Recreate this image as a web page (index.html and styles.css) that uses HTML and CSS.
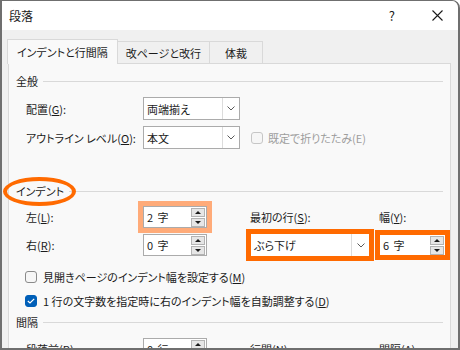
FILE: index.html
```html
<!DOCTYPE html>
<html lang="ja">
<head>
    <meta charset="UTF-8">
    <meta name="viewport" content="width=device-width, initial-scale=1.0">
    <title>段落</title>
    <link rel="stylesheet" href="styles.css">
</head>
<body>
<div class="window">
    <div class="titlebar">
        <span class="title">段落</span>
        <span class="help">?</span>
        <span class="close">
            <svg width="11" height="11" viewBox="0 0 11 11"><path d="M0.5 0.5 L10.5 10.5 M10.5 0.5 L0.5 10.5" stroke="#1a1a1a" stroke-width="1.1" fill="none"/></svg>
        </span>
    </div>
    <div class="content">
        <div class="tabs">
            <div class="tab active">インデントと行間隔</div>
            <div class="tab">改ページと改行</div>
            <div class="tab">体裁</div>
        </div>
        <div class="panel">
            <!-- 全般 -->
            <div class="group-title"><span>全般</span><div class="line"></div></div>
            <div class="grid general">
                <label>配置(<u>G</u>):</label>
                <div class="select w-main">
                    <span>両端揃え</span>
                    <i class="arrow"><svg width="8" height="5" viewBox="0 0 8 5"><path d="M0.5 0.5 L4 4 L7.5 0.5" stroke="#5a5a5a" fill="none"/></svg></i>
                </div>
                <div></div>
                <label>アウトライン レベル(<u>O</u>):</label>
                <div class="select w-main">
                    <span>本文</span>
                    <i class="arrow"><svg width="8" height="5" viewBox="0 0 8 5"><path d="M0.5 0.5 L4 4 L7.5 0.5" stroke="#5a5a5a" fill="none"/></svg></i>
                </div>
                <div class="check-row disabled">
                    <span class="check"></span>
                    <span>既定で折りたたみ(E)</span>
                </div>
            </div>

            <!-- インデント -->
            <div class="group-title indent-title">
                <span>インデント</span><div class="line"></div>
                <div class="ellipse"></div>
            </div>
            <div class="grid indent">
                <label>左(<u>L</u>):</label>
                <div class="spin mark-light">
                    <span>2 字</span>
                    <div class="spin-btns"><b class="up"></b><b class="down"></b></div>
                </div>
                <label>最初の行(<u>S</u>):</label>
                <label>幅(<u>Y</u>):</label>

                <label>右(<u>R</u>):</label>
                <div class="spin">
                    <span>0 字</span>
                    <div class="spin-btns"><b class="up"></b><b class="down"></b></div>
                </div>
                <div class="select w-first mark">
                    <span>ぶら下げ</span>
                    <i class="arrow wide"><svg width="8" height="5" viewBox="0 0 8 5"><path d="M0.5 0.5 L4 4 L7.5 0.5" stroke="#5a5a5a" fill="none"/></svg></i>
                </div>
                <div class="spin w-width mark">
                    <span>6 字</span>
                    <div class="spin-btns"><b class="up"></b><b class="down"></b></div>
                </div>
            </div>

            <div class="checks">
                <div class="check-row">
                    <span class="check"></span>
                    <span>見開きページのインデント幅を設定する(<u>M</u>)</span>
                </div>
                <div class="check-row">
                    <span class="check checked">
                        <svg width="8" height="6" viewBox="0 0 8 6"><path d="M0.8 3 L3 5 L7.2 0.8" stroke="#fff" stroke-width="1.2" fill="none"/></svg>
                    </span>
                    <span>1 行の文字数を指定時に右のインデント幅を自動調整する(<u>D</u>)</span>
                </div>
            </div>

            <!-- 間隔 -->
            <div class="group-title spacing-title"><span>間隔</span><div class="line"></div></div>
            <div class="grid spacing">
                <label>段落前(<u>B</u>):</label>
                <div class="spin">
                    <span>0 行</span>
                    <div class="spin-btns"><b class="up"></b><b class="down"></b></div>
                </div>
                <label>行間(<u>N</u>):</label>
                <label>間隔(<u>A</u>):</label>
            </div>
        </div>
    </div>
</div>
</body>
</html>
```

FILE: styles.css
```css
body {
    margin: 0;
    font-family: "Noto Sans CJK JP", "Noto Sans", sans-serif;
    font-size: 11px;
    color: #1b1b1b;
    font-feature-settings: "palt";
}
.window {
    box-sizing: border-box;
    width: 460px;
    height: 350px;
    overflow: hidden;
    background: #f0f0f0;
    border: 2px solid #6f6f6f;
    border-top-width: 1px;
    border-top-right-radius: 8px;
}
.titlebar {
    height: 29px;
    background: #fff;
    display: flex;
    align-items: center;
    padding-left: 7px;
}
.title {
    flex: 1;
    font-size: 12px;
    line-height: 16px;
}
.help {
    font-size: 13px;
    line-height: 16px;
    margin-right: 37px;
}
.close {
    display: flex;
    margin-right: 15px;
}
.content {
    padding: 0 7px 0 6px;
}
.tabs {
    height: 33px;
    display: flex;
    align-items: flex-end;
    position: relative;
    z-index: 1;
}
.tab {
    box-sizing: border-box;
    min-width: 53px;
    height: 22px;
    padding: 0 8px;
    display: flex;
    align-items: center;
    justify-content: center;
    border: 1px solid #d9d9d9;
    border-bottom: none;
    border-left: none;
    background: #f0f0f0;
    line-height: 16px;
}
.tab.active {
    height: 25px;
    margin-left: -1px;
    margin-bottom: -1px;
    padding: 0 9px 1px;
    border-left: 1px solid #d9d9d9;
    background: #f9f9f9;
}
.panel {
    height: 300px;
    background: #f9f9f9;
    border: 1px solid #d9d9d9;
}
.group-title {
    position: relative;
    height: 18px;
    margin: 8px 7px 0 7px;
    display: flex;
    align-items: center;
    line-height: 16px;
}
.group-title .line {
    flex: 1;
    height: 1px;
    margin-left: 5px;
    background: #d9d9d9;
}
.indent-title {
    margin-top: 30px;
}
.spacing-title {
    margin-top: 0;
}
.ellipse {
    position: absolute;
    left: -13px;
    top: -5px;
    width: 73px;
    height: 29px;
    box-sizing: border-box;
    border: 4px solid #ff6a00;
    border-radius: 50%;
}
.grid {
    display: grid;
    grid-template-columns: 117px 107px 129px 1fr;
    align-items: center;
    padding-left: 17px;
    line-height: 16px;
}
.general {
    grid-template-columns: 117px 107px 1fr;
    grid-auto-rows: 29px;
    margin-top: 4px;
}
.indent {
    grid-auto-rows: 28px;
    margin-top: 3px;
}
.spacing {
    grid-auto-rows: 28px;
    margin-top: 4px;
}
.select {
    box-sizing: border-box;
    height: 23px;
    display: flex;
    background: #fff;
    border: 1px solid #ababab;
}
.select span {
    flex: 1;
    padding-left: 3px;
    display: flex;
    align-items: center;
}
.select .arrow {
    width: 16px;
    border-left: 1px solid #dcdcdc;
    display: flex;
    align-items: center;
    justify-content: center;
}
.select .arrow.wide {
    width: 17px;
}
.w-main {
    width: 97px;
}
.w-first {
    width: 120px;
    height: 24px;
}
.spin {
    box-sizing: border-box;
    width: 64px;
    height: 22px;
    display: flex;
    align-items: center;
    justify-content: space-between;
    padding: 0 1px 0 3px;
    background: #fff;
    border: 1px solid #ababab;
}
.spin span {
    word-spacing: 2px;
}
.w-width {
    width: 67px;
}
.spin-btns {
    display: flex;
    flex-direction: column;
    gap: 1px;
}
.spin-btns b {
    box-sizing: border-box;
    width: 14px;
    height: 9px;
    border: 1px solid #b3b3b3;
    background: #e6e6e6;
    display: flex;
    align-items: center;
    justify-content: center;
}
.spin-btns b::after {
    content: "";
    width: 0;
    height: 0;
    border-left: 3px solid transparent;
    border-right: 3px solid transparent;
}
.spin-btns .up::after {
    border-bottom: 3px solid #1a1a1a;
}
.spin-btns .down::after {
    border-top: 3px solid #1a1a1a;
}
.mark-light {
    outline: 5px solid #ffab79;
}
.mark {
    outline: 5px solid #ff6a00;
    outline-offset: -1px;
}
.checks {
    margin-top: 6px;
    padding-left: 16px;
}
.check-row {
    height: 24px;
    display: flex;
    align-items: center;
    line-height: 16px;
}
.check {
    box-sizing: border-box;
    width: 12px;
    height: 12px;
    margin-right: 6px;
    border: 1px solid #8a8a8a;
    border-radius: 3px;
    background: #f6f6f6;
    display: flex;
    align-items: center;
    justify-content: center;
}
.check.checked {
    background: #005fb8;
    border-color: #005fb8;
}
.disabled {
    color: #9d9d9d;
}
.disabled .check {
    border-color: #c6c6c6;
    margin-left: 1px;
    margin-right: 5px;
}
```
